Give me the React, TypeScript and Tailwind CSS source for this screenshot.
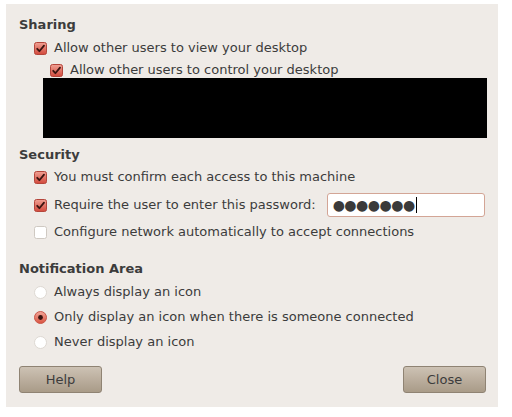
import React from 'react';

function Check({ on }: { on: boolean }) {
  return on ? (
    <svg width="13" height="13" viewBox="0 0 13 13" className="shrink-0">
      <defs>
        <linearGradient id="cb" x1="0" y1="0" x2="0" y2="1">
          <stop offset="0" stopColor="#f0a194" />
          <stop offset="1" stopColor="#d2493c" />
        </linearGradient>
      </defs>
      <rect x="0.5" y="0.5" width="12" height="12" rx="2" fill="url(#cb)" stroke="#b4453b" />
      <path d="M3.2 6.8 L5.4 9.2 L10 3.6" fill="none" stroke="#3a1410" strokeWidth="1.8" strokeLinecap="round" strokeLinejoin="round" />
    </svg>
  ) : (
    <svg width="13" height="13" viewBox="0 0 13 13" className="shrink-0">
      <rect x="0.5" y="0.5" width="12" height="12" rx="2" fill="#ffffff" stroke="#cfc9c2" />
    </svg>
  );
}

function Radio({ on }: { on: boolean }) {
  return on ? (
    <svg width="13" height="13" viewBox="0 0 13 13" className="shrink-0">
      <defs>
        <linearGradient id="rb" x1="0" y1="0" x2="0" y2="1">
          <stop offset="0" stopColor="#f3a89b" />
          <stop offset="1" stopColor="#d9523f" />
        </linearGradient>
      </defs>
      <circle cx="6.5" cy="6.5" r="6" fill="url(#rb)" stroke="#c9574a" />
      <circle cx="6.5" cy="6.5" r="2.4" fill="#3a1410" />
    </svg>
  ) : (
    <svg width="13" height="13" viewBox="0 0 13 13" className="shrink-0">
      <circle cx="6.5" cy="6.5" r="6" fill="#ffffff" stroke="#ddd8d2" />
    </svg>
  );
}

function Row({ children, h = 'h-[24px]', extra = '' }: { children: React.ReactNode; h?: string; extra?: string }) {
  return <div className={`flex items-center gap-[7px] pl-[15px] whitespace-nowrap ${h} ${extra}`}>{children}</div>;
}

export default function App() {
  return (
    <div className="w-[512px] h-[417px] bg-white pt-[4px] pl-[6px]" style={{ fontFamily: '"DejaVu Sans", sans-serif' }}>
      <div className="w-[492px] h-[403px] bg-[#efebe7] pt-[11px] pl-[13px] pr-[12px] text-[13px] text-[#3c3c3c] flex flex-col">
        <div className="h-[20px] flex items-center font-bold">Sharing</div>
        <Row extra="mt-[1px]">
          <Check on />
          <span>Allow other users to view your desktop</span>
        </Row>
        <div className="flex items-center gap-[7px] pl-[31px] h-[16px] mt-[2px] whitespace-nowrap">
          <Check on />
          <span>Allow other users to control your desktop</span>
        </div>
        <div className="ml-[24px] w-[444px] h-[60px] bg-black" />

        <div className="h-[20px] flex items-center font-bold mt-[7px]">Security</div>
        <Row>
          <Check on />
          <span>You must confirm each access to this machine</span>
        </Row>
        <Row h="h-[28px]" extra="mt-[2px]">
          <Check on />
          <span>Require the user to enter this password:</span>
          <div className="ml-[4px] w-[158px] h-[24px] bg-white border border-[#d3a596] rounded-[3px] flex items-center pl-[5px]">
            <span className="text-[14px] tracking-[-0.5px] leading-none text-[#3a3a3a]">●●●●●●●</span>
            <span className="w-[1px] h-[16px] bg-black ml-[1px]" />
          </div>
        </Row>
        <Row extra="mt-[1px]">
          <Check on={false} />
          <span>Configure network automatically to accept connections</span>
        </Row>

        <div className="h-[20px] flex items-center font-bold mt-[15px]">Notification Area</div>
        <Row extra="mt-[1px]">
          <Radio on={false} />
          <span>Always display an icon</span>
        </Row>
        <Row extra="mt-[1px]">
          <Radio on />
          <span>Only display an icon when there is someone connected</span>
        </Row>
        <Row extra="mt-[1px]">
          <Radio on={false} />
          <span>Never display an icon</span>
        </Row>

        <div className="flex justify-between mt-[12px]">
          <button className="w-[83px] h-[27px] rounded-[3px] border border-[#8f8373] bg-gradient-to-b from-[#cdc2b4] to-[#a99b88] text-[13px] text-[#3c3c3c]">Help</button>
          <button className="w-[83px] h-[27px] rounded-[3px] border border-[#8f8373] bg-gradient-to-b from-[#cdc2b4] to-[#a99b88] text-[13px] text-[#3c3c3c]">Close</button>
        </div>
      </div>
    </div>
  );
}
